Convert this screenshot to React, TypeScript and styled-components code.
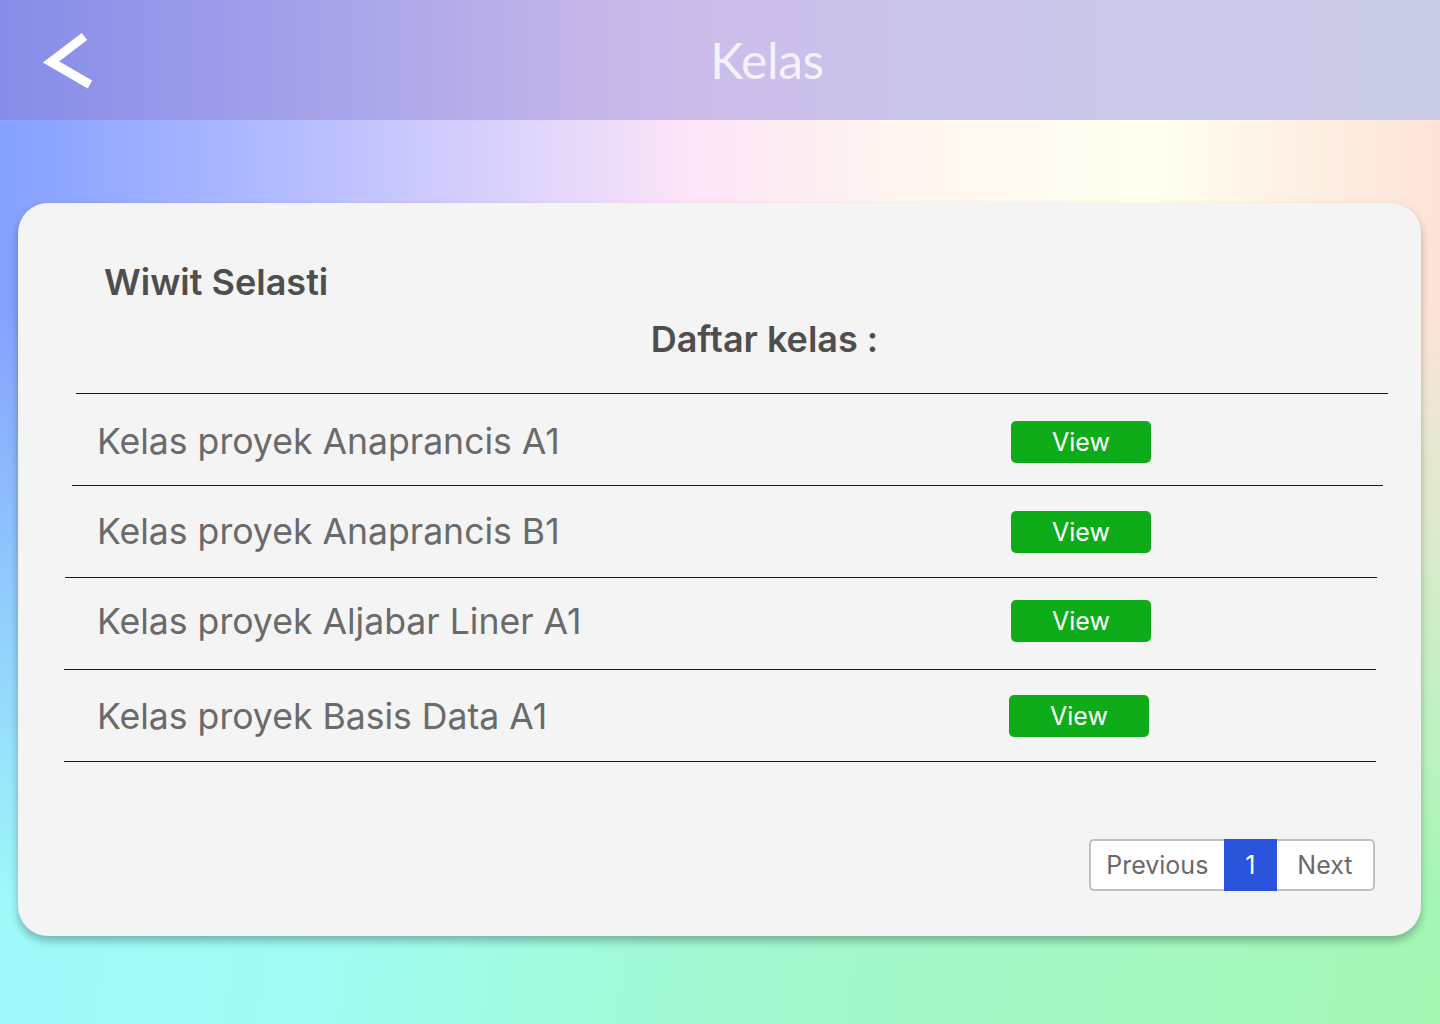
import React from 'react'
import styled, { createGlobalStyle } from 'styled-components'

const GlobalStyle = createGlobalStyle`
  html, body {
    margin: 0;
    padding: 0;
  }
  body {
    font-family: Inter, "Liberation Sans", sans-serif;
  }
  * {
    box-sizing: border-box;
  }
`

const Page = styled.div`
  position: relative;
  min-height: 1024px;
  width: 1440px;
  overflow: hidden;
  background: linear-gradient(100deg, #9cf9fd 0%, #9ffcf3 30%, #a2f8d0 55%, #a5f7b5 100%);
  display: flex;
  flex-direction: column;

  /* top colour wash, fades out downward */
  &::before {
    content: '';
    position: absolute;
    inset: 0;
    background: linear-gradient(
      to right,
      #84a0ff 0%,
      #b4bcff 20%,
      #e2d6fb 38%,
      #fde4f7 48%,
      #fff5f0 62%,
      #fffff0 80%,
      #fde2d8 100%
    );
    -webkit-mask-image: linear-gradient(to bottom, #000 0%, #000 30%, transparent 88%);
    mask-image: linear-gradient(to bottom, #000 0%, #000 30%, transparent 88%);
  }
`

const Header = styled.header`
  position: relative;
  z-index: 1;
  height: 120px;
  display: flex;
  align-items: center;
  padding-left: 40px;
  background: linear-gradient(
    to right,
    #868ce8 0%,
    #a9a6ea 25%,
    #c3b4e9 40%,
    #ccbbe9 47%,
    #cbc5ea 65%,
    #c9cbe6 100%
  );
`

const BackButton = styled.button`
  width: 60px;
  height: 62px;
  padding: 0;
  border: none;
  background: none;
  cursor: pointer;
  display: flex;
  margin-top: 2px;
`

const Title = styled.h1`
  flex: 1;
  margin: 0 6px 0 0;
  text-align: center;
  font-family: Lato, "Open Sans", sans-serif;
  font-weight: 400;
  font-size: 50px;
  letter-spacing: -0.5px;
  color: #f2f2f7;
  line-height: 60px;
`

const Card = styled.main`
  position: relative;
  z-index: 1;
  margin: 83px 19px 0 18px;
  height: 733px;
  background: #f4f4f4;
  border-radius: 30px;
  box-shadow: 0 5px 8px rgba(0, 0, 0, 0.28);
  padding-top: 57px;
  display: flex;
  flex-direction: column;
`

const Owner = styled.h2`
  margin: 0 0 0 86px;
  font-size: 36px;
  line-height: 44px;
  font-weight: 600;
  color: #4e4e4e;
`

const ListTitle = styled.h3`
  margin: 13px 0 0 0;
  padding-left: 90px;
  text-align: center;
  font-size: 36px;
  line-height: 44px;
  font-weight: 600;
  color: #4e4e4e;
`

const List = styled.div`
  margin-top: 32px;
  display: flex;
  flex-direction: column;
`

const Divider = styled.div<{ $left: number; $right: number }>`
  height: 1px;
  background: #1a1a1a;
  margin-left: ${(p) => p.$left}px;
  margin-right: ${(p) => p.$right}px;
`

const Row = styled.div<{ $shift?: number }>`
  height: 91px;
  display: grid;
  grid-template-columns: 1fr 140px;
  align-items: center;
  padding: 0 ${(p) => 270 + (p.$shift ?? 0)}px 0 79px;
`

const ClassName = styled.span<{ $lift?: number }>`
  font-size: 35.6px;
  color: #6a6a6a;
  line-height: 44px;
  position: relative;
  top: ${(p) => -(p.$lift ?? 0)}px;
`

const ViewButton = styled.button<{ $lift?: number }>`
  height: 42px;
  width: 140px;
  border: none;
  border-radius: 5px;
  background: #0dac18;
  color: #ffffff;
  font-family: Inter, "Liberation Sans", sans-serif;
  font-size: 25px;
  cursor: pointer;
  padding: 0;
  position: relative;
  top: ${(p) => -(p.$lift ?? 0)}px;
`

const Pager = styled.nav`
  margin: 77px 46px 0 0;
  display: flex;
  justify-content: flex-end;
`

const PageCell = styled.button<{ $kind: 'prev' | 'current' | 'next' }>`
  height: 52px;
  padding: 0 ${(p) => (p.$kind === 'current' ? 0 : p.$kind === 'prev' ? 15.5 : 20.5)}px;
  width: ${(p) => (p.$kind === 'current' ? '53px' : 'auto')};
  font-family: Inter, "Liberation Sans", sans-serif;
  font-size: 25px;
  cursor: pointer;
  color: ${(p) => (p.$kind === 'current' ? '#ffffff' : '#6a6a6a')};
  background: ${(p) => (p.$kind === 'current' ? '#2c53dc' : '#ffffff')};
  border: ${(p) => (p.$kind === 'current' ? 'none' : '2px solid #c0c0c0')};
  border-left: ${(p) => (p.$kind === 'prev' ? '2px solid #c0c0c0' : 'none')};
  border-right: ${(p) => (p.$kind === 'next' ? '2px solid #c0c0c0' : 'none')};
  border-radius: ${(p) =>
    p.$kind === 'prev' ? '5px 0 0 5px' : p.$kind === 'next' ? '0 5px 5px 0' : '0'};
`

// rows are hand-placed in the design, so a few are nudged by a pixel or two
const classes = [
  { name: 'Kelas proyek Anaprancis A1', shift: 0, textLift: -2, btnLift: -2 },
  { name: 'Kelas proyek Anaprancis B1', shift: 0, textLift: 0, btnLift: 0 },
  { name: 'Kelas proyek Aljabar Liner A1', shift: 0, textLift: 2, btnLift: 3 },
  { name: 'Kelas proyek Basis Data A1', shift: 2, textLift: -1, btnLift: 0 },
]

const dividers = [
  { left: 58, right: 33 },
  { left: 54, right: 38 },
  { left: 47, right: 44 },
  { left: 46, right: 45 },
  { left: 46, right: 45 },
]

function Chevron() {
  return (
    <svg width="60" height="62" viewBox="0 0 60 62">
      <polyline
        points="44.5,6.5 11,32 50,54.5"
        fill="none"
        stroke="#ffffff"
        strokeWidth="9"
        strokeLinejoin="miter"
        strokeMiterlimit="10"
      />
    </svg>
  )
}

export default function App() {
  return (
    <Page>
      <GlobalStyle />
      <Header>
        <BackButton aria-label="Kembali">
          <Chevron />
        </BackButton>
        <Title>Kelas</Title>
      </Header>
      <Card>
        <Owner>Wiwit Selasti</Owner>
        <ListTitle>Daftar kelas :</ListTitle>
        <List>
          <Divider $left={dividers[0].left} $right={dividers[0].right} />
          {classes.map((c, i) => (
            <React.Fragment key={c.name}>
              <Row $shift={c.shift}>
                <ClassName $lift={c.textLift}>{c.name}</ClassName>
                <ViewButton $lift={c.btnLift}>View</ViewButton>
              </Row>
              <Divider $left={dividers[i + 1].left} $right={dividers[i + 1].right} />
            </React.Fragment>
          ))}
        </List>
        <Pager>
          <PageCell $kind="prev">Previous</PageCell>
          <PageCell $kind="current">1</PageCell>
          <PageCell $kind="next">Next</PageCell>
        </Pager>
      </Card>
    </Page>
  )
}
